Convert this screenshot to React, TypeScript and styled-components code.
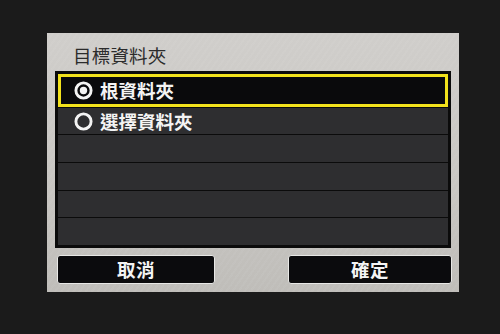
import * as React from 'react';
import styled, { createGlobalStyle } from 'styled-components';

const GlobalStyle = createGlobalStyle`
  html, body {
    margin: 0;
    padding: 0;
    background: #1b1b1b;
  }
  body {
    font-family: "Noto Sans CJK TC", "Noto Sans", sans-serif;
  }
`;

const Screen = styled.div`
  width: 500px;
  height: 334px;
  background: #1b1b1b;
  padding: 33px 0 0 47px;
  box-sizing: border-box;
`;

const Panel = styled.div`
  width: 412px;
  height: 259px;
  box-sizing: border-box;
  padding: 0 8px 8px 8px;
  display: flex;
  flex-direction: column;
  background: repeating-linear-gradient(
      -55deg,
      rgba(255, 255, 255, 0.04) 0px,
      rgba(255, 255, 255, 0.04) 2px,
      rgba(0, 0, 0, 0) 2px,
      rgba(0, 0, 0, 0) 5px
    ),
    linear-gradient(180deg, #d0cecb 0%, #c8c6c2 60%, #bfbdb9 100%);
`;

const Title = styled.div`
  height: 38px;
  display: flex;
  align-items: center;
  padding-left: 18px;
  padding-top: 6px;
  box-sizing: border-box;
  font-size: 18.5px;
  line-height: 1;
  color: #2b2b2b;
  letter-spacing: 0.2px;
`;

const List = styled.div`
  height: 177px;
  box-sizing: border-box;
  border: 3px solid #0b0b0b;
  background: #0b0b0b;
  display: flex;
  flex-direction: column;
  gap: 1px;
`;

const Row = styled.div<{ $selected?: boolean }>`
  flex: 1 1 0;
  min-height: 0;
  display: flex;
  align-items: center;
  gap: 7px;
  box-sizing: border-box;
  background: ${p => (p.$selected ? '#0a0a0c' : '#2e2e30')};
  border: ${p => (p.$selected ? '3px solid #f2e21c' : 'none')};
  padding-left: ${p => (p.$selected ? '13px' : '16px')};
  font-size: 18.5px;
  line-height: 1;
  font-weight: 700;
  color: #f4f4f4;
`;

const Footer = styled.div`
  display: flex;
  justify-content: space-between;
  margin: 7px -1px 0 2px;
`;

const Button = styled.div<{ $width: number }>`
  width: ${p => p.$width}px;
  height: 29px;
  box-sizing: border-box;
  border: 1.5px solid #e8e8e6;
  border-radius: 3px;
  background: #0b0b0d;
  display: flex;
  align-items: center;
  justify-content: center;
  font-size: 18.5px;
  line-height: 1;
  font-weight: 700;
  color: #f4f4f4;
  letter-spacing: 0.5px;
`;

function Radio({ checked }: { checked?: boolean }) {
  return (
    <svg width="19" height="19" viewBox="0 0 19 19">
      <circle cx="9.5" cy="9.5" r="7.6" fill="none" stroke="#f4f4f4" strokeWidth="2.9" />
      {checked && <circle cx="9.5" cy="9.5" r="3.7" fill="#f4f4f4" />}
    </svg>
  );
}

const items = [
  { label: '根資料夾', checked: true },
  { label: '選擇資料夾', checked: false },
];

export default function App() {
  return (
    <>
      <GlobalStyle />
      <Screen>
        <Panel>
          <Title>目標資料夾</Title>
          <List>
            {items.map(item => (
              <Row key={item.label} $selected={item.checked}>
                <Radio checked={item.checked} />
                {item.label}
              </Row>
            ))}
            <Row />
            <Row />
            <Row />
            <Row />
          </List>
          <Footer>
            <Button $width={158}>取消</Button>
            <Button $width={164}>確定</Button>
          </Footer>
        </Panel>
      </Screen>
    </>
  );
}
